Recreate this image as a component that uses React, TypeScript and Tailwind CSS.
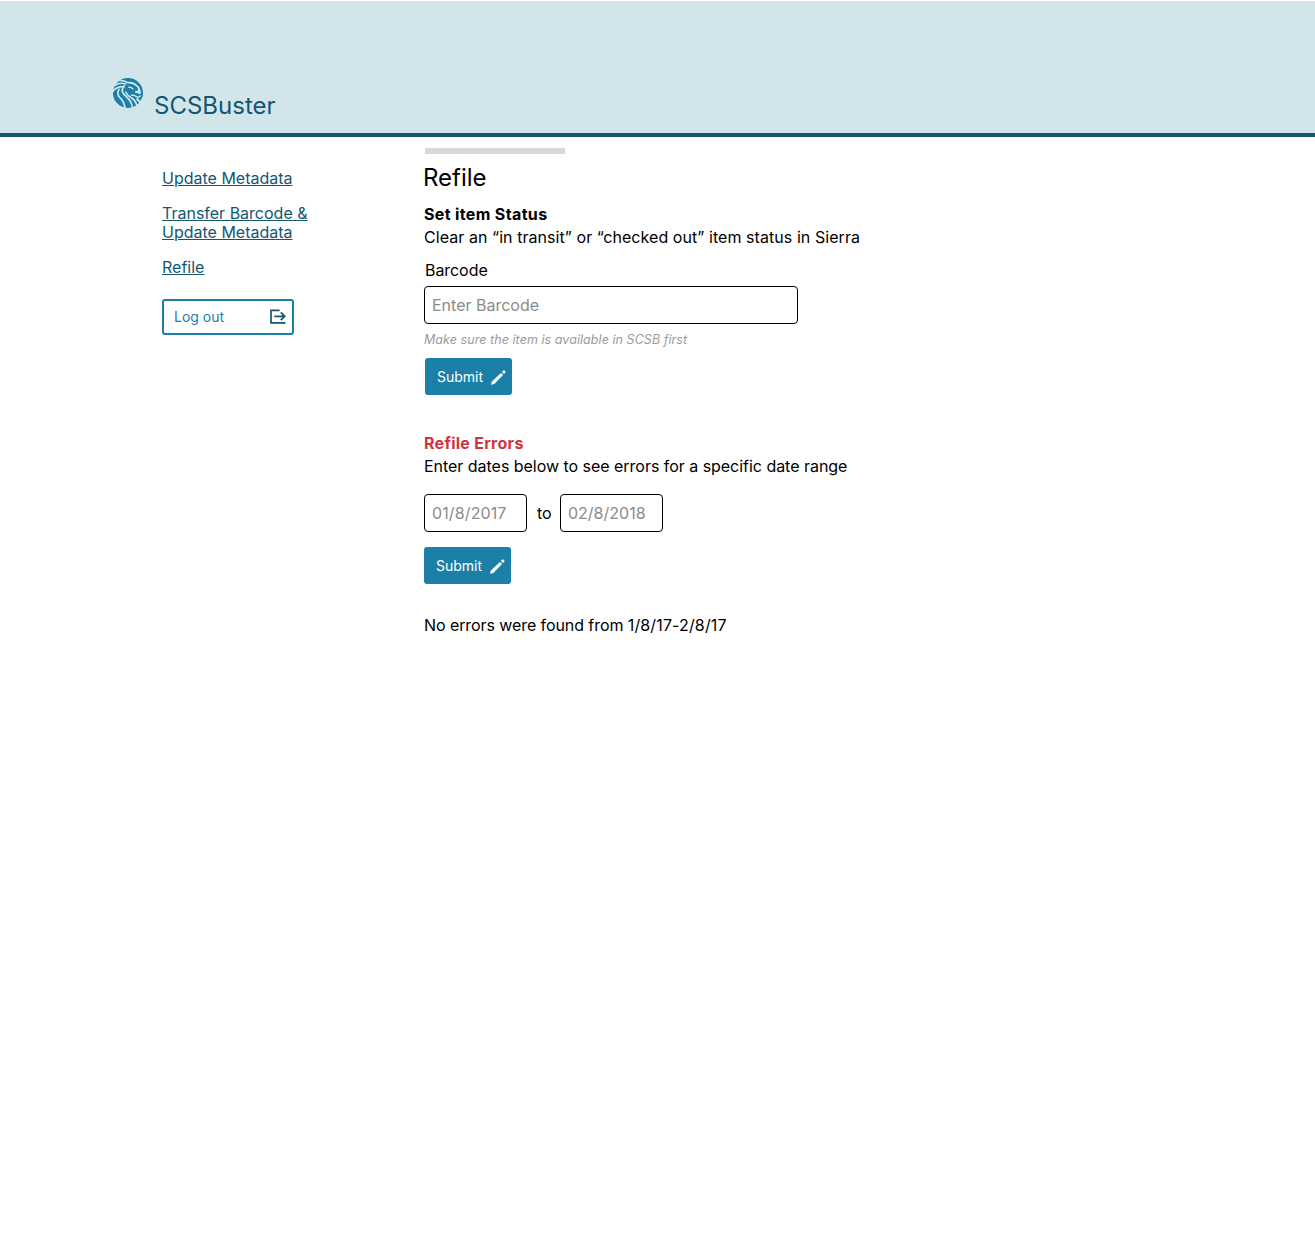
import type { ReactNode } from "react";

function LionLogo() {
  return (
    <svg viewBox="0 0 90 90" className="size-[30px]" aria-hidden="true">
      <circle cx="45" cy="45" r="45" fill="#1b7fa7" />
      <g fill="none" stroke="#d1e5eb" strokeLinecap="round" strokeLinejoin="round">
        <path d="M20 7 Q32 6 44 14 Q60 12 70 22 Q77 28 79 34" strokeWidth="5" />
        <path d="M6 22 Q20 12 38 18" strokeWidth="5" />
        <path d="M-2 42 Q8 26 32 26" strokeWidth="5" />
        <path d="M34 24 Q22 36 32 48 Q44 58 52 70 Q58 80 59 92" strokeWidth="5" />
        <path d="M18 34 Q10 48 20 58 Q34 70 36 92" strokeWidth="5" />
        <path d="M38 42 Q44 54 56 60 Q68 68 72 84" strokeWidth="5" />
        <path d="M47 28 Q54 26 60 33" strokeWidth="3.5" />
        <path d="M56 52 Q64 50 70 56 Q76 60 82 54" strokeWidth="4.5" />
      </g>
      <g fill="#d1e5eb">
        <path d="M75 25 L82 36 L84 45 L80 49 L74 46 L66 44 L67 38 L75 38Z" />
        <path d="M68 64 L74 60 L78 64 L84 60 L92 62 L86 72 L79 76 L74 70Z" />
        <path d="M-2 20 L4 18 L14 10 L20 4 L12 0 L-2 0Z" />
      </g>
      <path d="M78 59 L85 57 L85 66 L79 68Z" fill="#1b7fa7" />
    </svg>
  );
}

function LogoutIcon() {
  return (
    <svg viewBox="0 0 16 15" className="mb-px h-[15px] w-4" fill="none" stroke="#135772" strokeWidth="1.7" aria-hidden="true">
      <path d="M9.6 1.3H1V13.8H15.5" />
      <path d="M4.2 7.3H14.4M10.8 3.4L14.7 7.3L10.8 11.2" />
    </svg>
  );
}

function PencilIcon() {
  return (
    <svg viewBox="0 0 15 15" className="mt-px size-[15px]" fill="#fff" aria-hidden="true">
      <path d="M0 14.8L0.9 11.4L9.9 2.9L12.1 5.1L3.3 13.9Z" />
      <path d="M10.9 2L12.5 0.5Q13 0.2 13.4 0.6L14.5 1.7Q14.8 2.1 14.4 2.5L13 4.1Z" />
    </svg>
  );
}

function NavLink({ children }: { children: ReactNode }) {
  return (
    <a href="#" className="text-base leading-[19px] text-[#135772] underline">
      {children}
    </a>
  );
}

function SubmitButton() {
  return (
    <button className="flex h-[37px] w-[87px] items-center justify-between rounded-[3px] bg-[#1b7fa7] pr-1.5 pl-3 text-sm text-white">
      Submit
      <PencilIcon />
    </button>
  );
}

const inputStyle =
  "block h-[38px] rounded-[4px] border border-black bg-white px-[7px] text-base text-black placeholder:text-[#8b8b8b] outline-none";

export default function App() {
  return (
    <div className="min-h-screen bg-white pt-px font-['Inter',sans-serif] text-base leading-[19px] text-black">
      <header className="flex h-[136px] items-start border-b-4 border-[#135772] bg-[#d1e5eb] pt-[77px] pl-[113px]">
        <LionLogo />
        <h1 className="mt-[13px] ml-[11px] text-2xl leading-[29px] text-[#135772]">SCSBuster</h1>
      </header>

      <div className="flex">
        <nav className="flex w-[424px] shrink-0 flex-col items-start gap-4 pt-8 pl-[162px]">
          <NavLink>Update Metadata</NavLink>
          <NavLink>
            Transfer Barcode &amp;
            <br />
            Update Metadata
          </NavLink>
          <NavLink>Refile</NavLink>
          <button className="mt-1.5 flex h-9 w-33 items-center justify-between rounded-[3px] border-2 border-[#1b7fa7] pr-1.5 pl-2.5 text-sm text-[#1b7fa7]">
            Log out
            <LogoutIcon />
          </button>
        </nav>

        <main className="pt-[11px]">
          <div className="ml-px h-1.5 w-35 bg-[#d8d8d8]" />
          <h2 className="-ml-px mt-[9px] text-2xl leading-[29px]">Refile</h2>

          <section className="mt-[13px]">
            <h3 className="font-bold tracking-[0.36px]">Set item Status</h3>
            <p className="mt-1 tracking-[0.06px]">Clear an “in transit” or “checked out” item status in Sierra</p>
            <label className="mt-3.5 ml-px block tracking-[-0.06px]" htmlFor="barcode">Barcode</label>
            <input id="barcode" placeholder="Enter Barcode" className={`${inputStyle} mt-1.5 w-[374px]`} />
            <p className="mt-2 mb-[11px] text-[12.5px] leading-[15px] tracking-[0.06px] text-[#9b9b9b] italic">
              Make sure the item is available in SCSB first
            </p>
            <div className="ml-px">
              <SubmitButton />
            </div>
          </section>

          <section className="mt-[39px]">
            <h3 className="font-bold tracking-[0.27px] text-[#d0343f]">Refile Errors</h3>
            <p className="mt-1 tracking-[-0.03px]">Enter dates below to see errors for a specific date range</p>
            <div className="mt-[18px] mb-[15px] flex items-center">
              <input aria-label="Start date" placeholder="01/8/2017" className={`${inputStyle} w-[103px] tracking-[0.12px]`} />
              <span className="w-[33px] pl-2.5">to</span>
              <input aria-label="End date" placeholder="02/8/2018" className={`${inputStyle} w-[103px]`} />
            </div>
            <SubmitButton />
            <p className="mt-8 tracking-[-0.08px]">
              No errors were found from <span className="tracking-[0.14px]">1/8/17-2/8/17</span>
            </p>
          </section>
        </main>
      </div>
    </div>
  );
}
